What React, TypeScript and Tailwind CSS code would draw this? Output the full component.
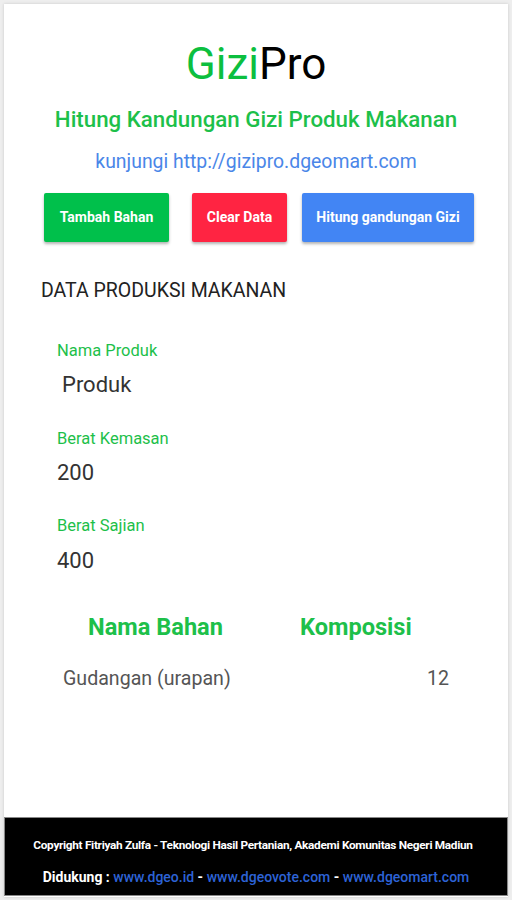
import React from "react";

export default function App() {
  return (
    <div className="w-[512px] h-[900px] bg-[#eeeeee] p-[4px] font-['Roboto',sans-serif]">
      <div className="h-[893px] bg-white flex flex-col shadow-[0_0_3px_rgba(0,0,0,0.15)]">
        <div className="flex-1 flex flex-col">
          <h1 className="text-center text-[44px] leading-none mt-[38px] tracking-[0px]">
            <span className="text-[#0cbf3f]">Gizi</span>
            <span className="text-black">Pro</span>
          </h1>
          <div className="text-center text-[22.3px] font-medium text-[#1dc04a] mt-[20px] leading-[26px]">
            Hitung Kandungan Gizi Produk Makanan
          </div>
          <div className="text-center text-[19.4px] text-[#4a86e8] mt-[18px] leading-[24px]">
            kunjungi http://gizipro.dgeomart.com
          </div>
          <div className="flex mt-[19px] ml-[40px] gap-0">
            <button className="w-[125px] h-[49px] bg-[#00c04b] text-white text-[14px] font-bold rounded-[2px] shadow-[0_2px_3px_rgba(0,0,0,0.3)]">
              Tambah Bahan
            </button>
            <button className="ml-[23px] w-[95px] h-[49px] bg-[#ff2442] text-white text-[14px] font-bold rounded-[2px] shadow-[0_2px_3px_rgba(0,0,0,0.3)]">
              Clear Data
            </button>
            <button className="ml-[15px] w-[172px] h-[49px] bg-[#4285f4] text-white text-[14px] font-bold rounded-[2px] shadow-[0_2px_3px_rgba(0,0,0,0.3)]">
              Hitung gandungan Gizi
            </button>
          </div>
          <div className="ml-[37px] mt-[37px] text-[19.5px] text-[#222] leading-[24px]">
            DATA PRODUKSI MAKANAN
          </div>
          <div className="ml-[53px] mt-[38px] flex flex-col">
            <div className="text-[16.5px] text-[#1dc04a] leading-[20px]">Nama Produk</div>
            <div className="text-[22px] text-[#333] leading-[26px] mt-[11px] ml-[5px]">Produk</div>
            <div className="text-[16.5px] text-[#1dc04a] leading-[20px] mt-[31px]">Berat Kemasan</div>
            <div className="text-[22px] text-[#333] leading-[26px] mt-[11px]">200</div>
            <div className="text-[16.5px] text-[#1dc04a] leading-[20px] mt-[30px]">Berat Sajian</div>
            <div className="text-[22px] text-[#333] leading-[26px] mt-[12px]">400</div>
          </div>
          <div className="flex mt-[39px] text-[23.6px] font-bold text-[#1dc04a] leading-[28px]">
            <div className="ml-[84px]">Nama Bahan</div>
            <div className="ml-[77px]">Komposisi</div>
          </div>
          <div className="flex justify-between mt-[26px] text-[19.6px] text-[#555] leading-[24px] pl-[59px] pr-[59px]">
            <div>Gudangan (urapan)</div>
            <div>12</div>
          </div>
        </div>
        <div className="h-[79px] bg-black border border-[#888] flex flex-col items-center pt-[19px] mb-[1px]">
          <div className="text-white text-[11.8px] font-bold leading-[16px] tracking-[-0.3px] mr-[6px]">
            Copyright Fitriyah Zulfa - Teknologi Hasil Pertanian, Akademi Komunitas Negeri Madiun
          </div>
          <div className="mt-[15px] text-[14px] font-bold leading-[18px]">
            <span className="text-white">Didukung : </span>
            <span className="text-[#2d63d6] font-medium"> www.dgeo.id</span>
            <span className="text-white"> - </span>
            <span className="text-[#2d63d6] font-medium">www.dgeovote.com</span>
            <span className="text-white"> - </span>
            <span className="text-[#2d63d6] font-medium">www.dgeomart.com</span>
          </div>
        </div>
      </div>
    </div>
  );
}
